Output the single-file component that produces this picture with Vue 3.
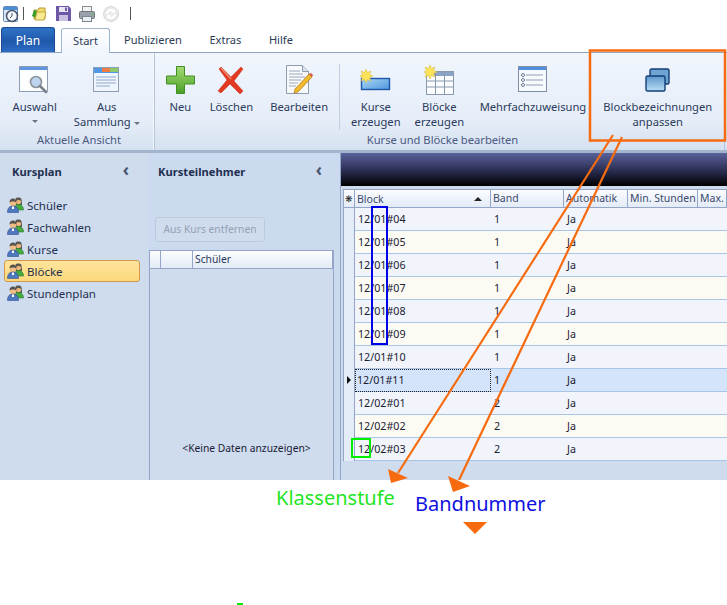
<template>
  <div class="page">
    <div class="app">
      <div class="qat">
        <svg class="qi" width="16" height="18" viewBox="0 0 16 18"><rect x="0.5" y="1.5" width="14" height="15" rx="1" fill="#dfe9f5" stroke="#5f86b5"/><rect x="1" y="2" width="13" height="3" fill="#4d8fd6"/><circle cx="9" cy="11" r="5.5" fill="#f4f7fb" stroke="#45546a" stroke-width="1.5"/><path d="M9 8v3l-2 2" fill="none" stroke="#45546a"/></svg>
        <i class="qsep"></i>
        <svg class="qi qi-folder" width="16" height="16" viewBox="0 0 16 16"><path d="M3 4h4l1-2h6v11H3z" fill="#f3dc6b" stroke="#b49a33"/><path d="M1 10l2-6 3 1-1 7z" fill="#3a9c2e"/><path d="M6 6h9l-2 8H4z" fill="#f8ea92" stroke="#c2a63c"/></svg>
        <svg class="qi qi-save" width="15" height="15" viewBox="0 0 15 15"><path d="M0 0h12.5L15 2.5V15H0z" fill="#6f57a8"/><rect x="3" y="1" width="9" height="5" fill="#e9e6f3"/><rect x="3" y="9" width="9" height="6" fill="#c8c0e0"/><rect x="9" y="1.5" width="2" height="3.5" fill="#6f57a8"/></svg>
        <svg class="qi qi-print" width="16" height="16" viewBox="0 0 16 16"><rect x="3.5" y="0.5" width="9" height="6" fill="#f3f3f3" stroke="#8a8f96"/><rect x="0.5" y="5.5" width="15" height="7" rx="1" fill="#99a1aa" stroke="#6f767e"/><rect x="3.5" y="10.5" width="9" height="5" fill="#e8eff7" stroke="#7f868e"/><rect x="12.5" y="7" width="2" height="1.5" fill="#5fc05a"/></svg>
        <svg class="qi qi-refresh" width="16" height="16" viewBox="0 0 16 16"><circle cx="8" cy="8" r="7.5" fill="#eaeaea" stroke="#d6d6d6"/><path d="M4 8a4 4 0 0 1 7-2.5M12 8a4 4 0 0 1-7 2.5" fill="none" stroke="#fff" stroke-width="2"/><path d="M12 3v4H8zM4 13V9h4z" fill="#fff"/></svg>
        <i class="qsep qsep-last"></i>
      </div>

      <div class="tabs">
        <div class="tab-plan">Plan</div>
        <div class="tab tab-active">Start</div>
        <div class="tab">Publizieren</div>
        <div class="tab">Extras</div>
        <div class="tab">Hilfe</div>
      </div>

      <div class="ribbon">
        <div class="group group-view">
          <div class="group-items">
            <div class="rbtn">
              <div class="icon">
                <svg width="31" height="28" viewBox="0 0 31 28"><rect x="0.5" y="0.5" width="28" height="25" fill="#fdfefe" stroke="#8d9db5"/><rect x="1" y="1" width="27" height="3" fill="#5f95df"/><circle cx="17" cy="16" r="5.5" fill="#bcd4ec" stroke="#8b929b" stroke-width="1.6"/><path d="M21 20l6 6" stroke="#7b8088" stroke-width="2.6" stroke-linecap="round"/></svg>
              </div>
              <span>Auswahl</span>
              <span class="caret caret-row"></span>
            </div>
            <div class="rbtn">
              <div class="icon">
                <svg width="27" height="26" viewBox="0 0 27 26"><rect x="0.5" y="0.5" width="25" height="24" fill="#eef5fd" stroke="#8d9db5"/><rect x="1" y="1" width="24" height="5" fill="#4f98e6"/><rect x="9" y="1" width="8" height="4" fill="#ef7d43"/><rect x="17" y="1" width="8" height="4" fill="#8fca6a"/><path d="M3 10h20M3 13h20M3 16h20M3 19h14" stroke="#93a8c6"/></svg>
              </div>
              <span>Aus</span>
              <span>Sammlung <i class="caret"></i></span>
            </div>
          </div>
          <div class="group-label">Aktuelle Ansicht</div>
        </div>

        <div class="group group-edit">
          <div class="group-items">
            <div class="rbtn rbtn-new">
              <div class="icon">
                <svg width="29" height="28" viewBox="0 0 29 28"><path d="M10.5 0.5h8v9.5h10v8h-10v9.500h-8V18H0.500v-8h10z" fill="url(#plus)" stroke="#3f8f22"/><defs><linearGradient id="plus" x1="0" y1="0" x2="0" y2="1"><stop offset="0" stop-color="#a5dc74"/><stop offset="1" stop-color="#4a9e28"/></linearGradient></defs></svg>
              </div>
              <span>Neu</span>
            </div>
            <div class="rbtn">
              <div class="icon">
                <svg width="26" height="28" viewBox="0 0 26 28"><path d="M3 1l10 10L23 1l2 2-9 12 9 10-3 3-10-10L3 27l-3-2 9-11L1 3z" fill="#e23a22" stroke="#c92a16" stroke-width="0.5"/><path d="M3 2l10 11" stroke="#f08a70" stroke-width="1.500"/></svg>
              </div>
              <span>Löschen</span>
            </div>
            <div class="rbtn">
              <div class="icon">
                <svg width="27" height="30" viewBox="0 0 27 30"><path d="M0.500 0.500h16l6 6v22H0.500z" fill="#f7f9fb" stroke="#8e9cae"/><path d="M16.500 0.500v6h6" fill="#dce4ee" stroke="#8e9cae"/><path d="M3 6h11M3 9h14M3 12h16M3 15h12M3 18h9M3 21h7" stroke="#9aa8bb"/><path d="M9 24l14-15 3 3-14 15-4 1z" fill="#f2b92d" stroke="#a9791d" stroke-width="0.7"/><path d="M23 9l3 3 1-2-2-2z" fill="#d9583c"/></svg>
              </div>
              <span>Bearbeiten</span>
            </div>
            <i class="vsep"></i>
            <div class="rbtn rbtn-tight">
              <div class="icon">
                <svg width="31" height="22" viewBox="0 0 31 22"><rect x="1.500" y="9.500" width="28" height="11" fill="url(#course)" stroke="#1d56a8" stroke-width="1.400"/><defs><linearGradient id="course" x1="0" y1="0" x2="1" y2="1"><stop offset="0" stop-color="#a9d6f4"/><stop offset="1" stop-color="#4f97dc"/></linearGradient></defs><path d="M6 0l1.500 3.500L11 2 9.500 5.500 13 7 9.500 8.500 11 12 7.500 10.500 6 14 4.500 10.500 1 12l1.500-3.500L0 7l2.500-1.500L1 2l3.500 1.500z" fill="#fbe35a" stroke="#d8b63a" stroke-width="0.500"/></svg>
              </div>
              <span>Kurse</span>
              <span>erzeugen</span>
            </div>
            <div class="rbtn rbtn-tight">
              <div class="icon">
                <svg width="30" height="30" viewBox="0 0 30 30"><rect x="2.500" y="6.500" width="27" height="23" fill="#fbfcfe" stroke="#8a98ad"/><rect x="3" y="7" width="26" height="4" fill="#8ba3c4"/><path d="M2.500 16h27M2.500 22h27M11.500 7v22M20.500 7v22" stroke="#8a98ad"/><path d="M6 0l1.500 3.500L11 2 9.500 5.500 13 7 9.500 8.500 11 12 7.500 10.500 6 14 4.500 10.500 1 12l1.500-3.500L0 7l2.500-1.500L1 2l3.500 1.500z" fill="#fbe35a" stroke="#d8b63a" stroke-width="0.500"/></svg>
              </div>
              <span>Blöcke</span>
              <span>erzeugen</span>
            </div>
            <div class="rbtn">
              <div class="icon">
                <svg width="29" height="27" viewBox="0 0 29 27"><rect x="0.500" y="0.500" width="28" height="25" fill="#f7fafd" stroke="#7f8ea6"/><rect x="1" y="1" width="27" height="3" fill="#4f8fdc"/><path d="M8 9h17M8 14h17M8 19h17" stroke="#8e9cb2"/><circle cx="5" cy="9" r="1.500" fill="none" stroke="#6f7e95"/><circle cx="5" cy="14" r="1.500" fill="none" stroke="#6f7e95"/><circle cx="5" cy="19" r="1.500" fill="none" stroke="#6f7e95"/></svg>
              </div>
              <span>Mehrfachzuweisung</span>
            </div>
            <div class="rbtn">
              <div class="icon">
                <svg width="25" height="24" viewBox="0 0 25 24"><rect x="5" y="1" width="19" height="15" rx="1.500" fill="#6fa4d2" stroke="#123f78" stroke-width="1.400"/><rect x="1" y="8" width="19" height="15" rx="1.500" fill="url(#blk)" stroke="#123f78" stroke-width="1.400"/><defs><linearGradient id="blk" x1="0" y1="0" x2="0" y2="1"><stop offset="0" stop-color="#5d97cd"/><stop offset="1" stop-color="#b9dcf3"/></linearGradient></defs></svg>
              </div>
              <span>Blockbezeichnungen</span>
              <span>anpassen</span>
            </div>
          </div>
          <div class="group-label">Kurse und Blöcke bearbeiten</div>
        </div>
      </div>

      <div class="main">
        <aside class="side">
          <div class="side-title">Kursplan <span class="chev">‹</span></div>
          <ul class="nav">
            <li v-for="item in navItems" :key="item" :class="{ active: item === 'Blöcke' }">
              <svg width="17" height="16" viewBox="0 0 17 16">
                <path d="M8 8c0-1 0-6 3.500-6S15 4 15 8z" fill="#5b5852"/>
                <circle cx="11.500" cy="4.500" r="2.600" fill="#eeb77c"/>
                <path d="M8.500 1.500c1-1.300 5-1.300 6 0.500l-0.500 2c-1.500-1.500-3.500-1.500-5 0z" fill="#5b5852"/>
                <path d="M7 13c0-4 2-5.500 4.500-5.500S16.500 9 16.500 13z" fill="#45ab3f" stroke="#2d7d2b" stroke-width="0.600"/>
                <circle cx="6" cy="6" r="3.200" fill="#f0bd84"/>
                <path d="M2.500 5.500c0-3 1.500-4 3.500-4s3.500 1 3.500 4C8 4 4 4 2.500 5.500z" fill="#55524c"/>
                <path d="M0.500 15.500c0-4.500 2-6.500 5.500-6.500s5.500 2 5.500 6.500z" fill="#4f78c0" stroke="#2f4d8c" stroke-width="0.600"/>
                <path d="M5 9.500h2v2.500H5z" fill="#fff"/>
              </svg>
              <span>{{ item }}</span>
            </li>
          </ul>
        </aside>

        <section class="mid">
          <div class="side-title mid-title">Kursteilnehmer <span class="chev">‹</span></div>
          <div class="mid-btn">Aus Kurs entfernen</div>
          <div class="mid-table">
            <div class="mid-head">
              <div></div>
              <div></div>
              <div class="mid-head-label">Schüler</div>
            </div>
            <div class="mid-empty">&lt;Keine Daten anzuzeigen&gt;</div>
          </div>
        </section>

        <section class="content">
          <div class="band"></div>
          <div class="grid">
            <div class="grid-row grid-head">
              <div class="cell-rh star">❋</div>
              <div class="cell head-block">Block <i class="sort"></i></div>
              <div class="cell">Band</div>
              <div class="cell">Automatik</div>
              <div class="cell">Min. Stunden</div>
              <div class="cell">Max.</div>
            </div>
            <div
              v-for="(row, i) in rows"
              :key="row.block"
              class="grid-row"
              :class="{ alt: i % 2 === 1, selected: row.block === selectedBlock }"
            >
              <div class="cell-rh"><i v-if="row.block === selectedBlock" class="pointer"></i></div>
              <div class="cell-val" :class="{ focus: row.block === selectedBlock }">{{ row.block }}</div>
              <div class="cell-val">{{ row.band }}</div>
              <div class="cell-val">Ja</div>
              <div class="cell-val"></div>
              <div class="cell-val"></div>
            </div>
          </div>
        </section>
      </div>
    </div>

    <svg class="marks" width="727" height="605" viewBox="0 0 727 605">
      <rect x="590" y="50.500" width="135" height="90" fill="none" stroke="#f76b10" stroke-width="2.500"/>
      <path d="M613 135L398 473M622 137L459 480" fill="none" stroke="#f76b10" stroke-width="2.200"/>
      <path d="M388 469L408 478L391 483zM448 476L470 486L453 492zM463 522H487L475 534z" fill="#f76b10"/>
      <rect x="372" y="207" width="15" height="137" fill="none" stroke="#0000e6" stroke-width="2"/>
      <rect x="352" y="439" width="18" height="18" fill="none" stroke="#00ee00" stroke-width="2"/>
      <rect x="237" y="603" width="6" height="2" fill="#00ee00"/>
    </svg>
    <div class="note note-green">Klassenstufe</div>
    <div class="note note-blue">Bandnummer</div>
  </div>
</template>

<script setup>
const navItems = ['Schüler', 'Fachwahlen', 'Kurse', 'Blöcke', 'Stundenplan']
const selectedBlock = '12/01#11'

const rows = [
  { block: '12/01#04', band: 1 },
  { block: '12/01#05', band: 1 },
  { block: '12/01#06', band: 1 },
  { block: '12/01#07', band: 1 },
  { block: '12/01#08', band: 1 },
  { block: '12/01#09', band: 1 },
  { block: '12/01#10', band: 1 },
  { block: '12/01#11', band: 1 },
  { block: '12/02#01', band: 2 },
  { block: '12/02#02', band: 2 },
  { block: '12/02#03', band: 2 },
]
</script>

<style>
html, body {
  margin: 0;
  background: #fff;
}
</style>

<style scoped>
.page {
  position: relative;
  width: 727px;
  height: 605px;
  overflow: hidden;
  background: #fff;
  font-family: "Noto Sans", "Liberation Sans", sans-serif;
  font-size: 11.2px;
  color: #2b3a5c;
}

.app {
  height: 480px;
  display: flex;
  flex-direction: column;
}

.qat {
  height: 27px;
  display: flex;
  align-items: center;
  padding-left: 3px;
  box-sizing: border-box;
}

.qsep {
  width: 1px;
  height: 13px;
  background: #555;
  margin: 0 6px 0 4px;
}

.qi-folder { margin-left: 1px; }
.qi-save { margin-left: 9px; }
.qi-print { margin-left: 8px; }
.qi-refresh { margin-left: 8px; }
.qsep-last { margin-left: 11px; }

.tabs {
  height: 26px;
  display: flex;
  align-items: flex-end;
  padding-left: 1px;
  border-bottom: 1px solid #8fa6c4;
  box-sizing: border-box;
  font-size: 11.1px;
}

.tab-plan {
  width: 54px;
  height: 25px;
  box-sizing: border-box;
  margin-right: 6px;
  padding-top: 4px;
  text-align: center;
  font-size: 12px;
  color: #fff;
  background: linear-gradient(#2f74c8, #1f58ab 55%, #2c6dc4);
  border: 1px solid #1a4a94;
  border-bottom: 0;
  border-radius: 3px 3px 0 0;
}

.tab {
  padding: 0 13.500px 0 14px;
  height: 24px;
  line-height: 24px;
  color: #2d3b57;
}

.tab-active {
  width: 49px;
  box-sizing: border-box;
  padding: 0;
  text-align: center;
  margin-bottom: -1px;
  height: 25px;
  background: linear-gradient(#fff, #f0f5fc);
  border: 1px solid #9fb4cf;
  border-bottom: 0;
  border-radius: 3px 3px 0 0;
}

.ribbon {
  height: 100px;
  display: flex;
  background: linear-gradient(#f1f6fd, #e5edf8 70%, #d5e1f0);
  border-bottom: 3px solid #a3b5cd;
  box-sizing: border-box;
}

.group {
  display: flex;
  flex-direction: column;
  border-right: 1px solid #b6c6da;
  box-sizing: border-box;
}

.group-view {
  width: 155px;
  flex: none;
  padding-left: 4px;
  box-shadow: inset -1px 0 0 #f4f8fd;
}

.group-edit {
  flex: 1;
  min-width: 0;
  margin-right: 2px;
  padding-left: 6px;
}

.group-items {
  flex: 1;
  display: flex;
  padding-top: 11px;
}

.group-label {
  height: 20px;
  text-align: center;
  color: #4b5a80;
  line-height: 19px;
}

.rbtn {
  display: flex;
  flex-direction: column;
  align-items: center;
  padding: 0 8.500px;
  line-height: 15px;
  white-space: nowrap;
}

.rbtn-new {
  margin-right: 1.500px;
}

.rbtn-tight {
  padding: 0 7px;
}

/* width 0 so the label alone sets the button width; the svg overflows evenly */
.icon {
  width: 0;
  height: 31px;
  margin-bottom: 4px;
  display: flex;
  align-items: center;
  justify-content: center;
}

.icon svg {
  flex: none;
}

.caret {
  display: inline-block;
  width: 0;
  height: 0;
  border-left: 3px solid transparent;
  border-right: 3px solid transparent;
  border-top: 3px solid #6b7484;
  vertical-align: middle;
}

.caret-row {
  margin-top: 6px;
}

.vsep {
  width: 1px;
  height: 66px;
  margin: 0 4px 0 2.500px;
  background: #c2cfe0;
}

.main {
  flex: 1;
  min-height: 0;
  display: flex;
  background: #cfdcee;
}

.side {
  width: 143px;
  flex: none;
}

.side-title {
  display: flex;
  justify-content: space-between;
  align-items: center;
  height: 36px;
  padding: 0 14px 0 12px;
  font-weight: 700;
  font-size: 11.200px;
  color: #22304f;
}

.chev {
  font-size: 17px;
  line-height: 1;
  color: #48556e;
  margin-top: -3px;
}

.nav {
  list-style: none;
  margin: 5px 0 0;
  padding: 0 3px 0 4px;
}

.nav li {
  height: 22px;
  display: flex;
  align-items: center;
  gap: 3px;
  padding-left: 3px;
  font-size: 11.500px;
  color: #22304f;
  box-sizing: border-box;
}

.nav li.active {
  background: linear-gradient(#fee39c, #fdd97c);
  border: 1px solid #cf9a4e;
  border-radius: 3px;
  padding-left: 2px;
}

.mid {
  width: 192px;
  margin-left: 5px;
  flex: none;
  display: flex;
  flex-direction: column;
  background: #cbdaef;
  font-size: 10.300px;
}

.mid-title {
  padding: 0 18px 0 10px;
}

.mid-btn {
  align-self: flex-start;
  margin: 28px 0 8px 7px;
  width: 110px;
  height: 25px;
  line-height: 23px;
  box-sizing: border-box;
  text-align: center;
  color: #94a1b5;
  border: 1px solid #bccade;
  border-radius: 3px;
  background: #cfdcee;
}

.mid-table {
  flex: 1;
  width: 185px;
  margin-left: 1px;
  box-sizing: border-box;
  display: flex;
  flex-direction: column;
  border: 1px solid #93a6c8;
  border-bottom: 0;
  background: #cfdcee;
}

.mid-head {
  height: 18px;
  display: grid;
  grid-template-columns: 11px 32px 1fr;
  background: linear-gradient(#fcfdff, #e2eaf6);
  border-bottom: 1px solid #93a6c8;
  box-sizing: border-box;
}

.mid-head > div {
  border-right: 1px solid #93a6c8;
}

.mid-head-label {
  padding-left: 2px;
  line-height: 17px;
  color: #2b3a5c;
}

.mid-empty {
  flex: 1;
  display: flex;
  align-items: flex-end;
  justify-content: center;
  padding: 0 0 24px 10px;
  line-height: 16px;
  color: #1b2238;
}

.content {
  flex: 1;
  min-width: 0;
  display: flex;
  flex-direction: column;
  border-left: 1px solid #93a6c8;
  font-size: 10.700px;
}

.band {
  height: 33px;
  flex: none;
  background: linear-gradient(#5a629a, #292c50 55%, #000);
}

.grid {
  margin: 3px 0 0 2px;
  border-top: 1px solid #93a6c8;
}

.grid-row {
  display: grid;
  grid-template-columns: 12px 136px 73px 64px 70px 1fr;
  height: 23px;
  box-sizing: border-box;
  background: #f1f5fb;
  border-bottom: 1px solid #a8c5e6;
}

.grid-row.alt {
  background: #fcfbf3;
}

.grid-row.selected {
  background: #d4e5fb;
}

.grid-row.grid-head {
  height: 18px;
  background: linear-gradient(#fbfcff, #e3ebf6);
  border-bottom: 1px solid #93a6c8;
  line-height: 16px;
  color: #3b4a6d;
  font-size: 10.500px;
}

.cell {
  padding-left: 2px;
  border-right: 1px solid #93a6c8;
  white-space: nowrap;
}

.head-block {
  display: flex;
  justify-content: space-between;
  align-items: center;
  padding-right: 8px;
}

.sort {
  width: 0;
  height: 0;
  border-left: 4px solid transparent;
  border-right: 4px solid transparent;
  border-bottom: 4px solid #222;
}

.cell-rh {
  display: flex;
  align-items: center;
  justify-content: center;
  background: #e4ecf7;
  border: solid #93a6c8;
  border-width: 0 1px 0 1px;
  box-sizing: border-box;
}

.star {
  font-size: 9px;
  color: #222;
  background: none;
}

.pointer {
  width: 0;
  height: 0;
  border-top: 4px solid transparent;
  border-bottom: 4px solid transparent;
  border-left: 4px solid #111;
}

.cell-val {
  padding-left: 3px;
  line-height: 22.500px;
  color: #1a2030;
}

.cell-val.focus {
  outline: 1px dotted #222;
  outline-offset: -1px;
  padding-left: 2px;
}

.marks {
  position: absolute;
  left: 0;
  top: 0;
  pointer-events: none;
}

.note {
  position: absolute;
  font-size: 20px;
  line-height: 26px;
  white-space: nowrap;
}

.note-green {
  left: 276px;
  top: 485px;
  color: #1ee51e;
}

.note-blue {
  left: 415px;
  top: 491px;
  color: #1010e0;
}
</style>
